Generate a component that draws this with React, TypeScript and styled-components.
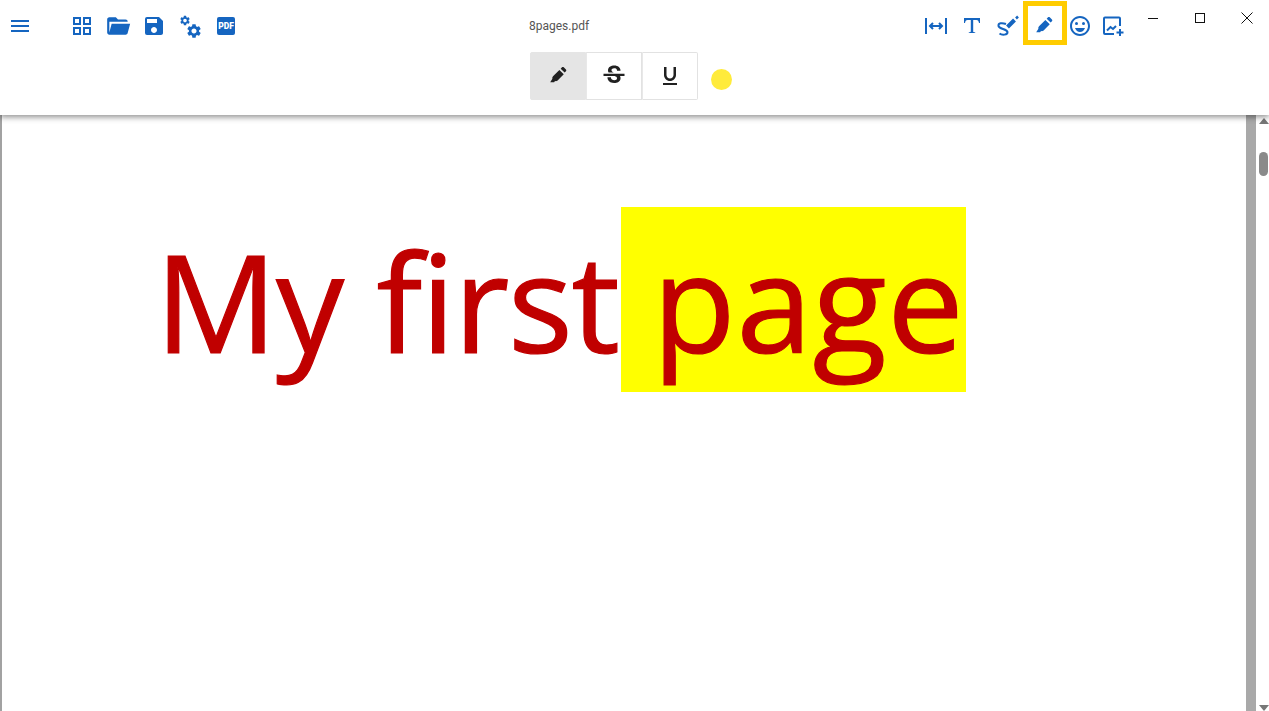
import styled, { createGlobalStyle } from "styled-components";
import {
  MdMenu,
  MdSave,
  MdOutlineEmojiEmotions,
  MdStrikethroughS,
  MdFormatUnderlined,
  MdSettings,
} from "react-icons/md";

const GlobalStyle = createGlobalStyle`
  html, body {
    margin: 0;
    height: 100%;
    overflow: hidden;
    background: #fff;
    font-family: "Roboto", "Liberation Sans", sans-serif;
  }
  #root { height: 100%; }
`;

const Wrapper = styled.div`
  height: 711px;
  display: flex;
  flex-direction: column;
`;

const Header = styled.header`
  position: relative;
  z-index: 2;
  height: 115px;
  flex: none;
  background: #fff;
  box-shadow: 0 2px 6px rgba(0, 0, 0, 0.45);
`;

const TopRow = styled.div`
  height: 52px;
  display: flex;
`;

const LeftGroup = styled.div`
  display: flex;
  padding: 8px 0 0 2px;
`;

const MenuSlot = styled.div`
  margin-right: 26px;
`;

const Title = styled.div`
  flex: 1;
  padding-top: 18px;
  text-align: center;
  font-size: 12px;
  line-height: 16px;
  color: #555;
`;

const RightGroup = styled.div`
  position: relative;
  display: flex;
  padding: 8px 0 0 0;
  margin-left: 44px;
`;

const IconButton = styled.div`
  width: 36px;
  height: 36px;
  display: flex;
  align-items: center;
  justify-content: center;
  color: #1565c0;
`;

const Marked = styled.div`
  position: absolute;
  left: 105px;
  top: 1px;
  width: 44px;
  height: 44px;
  box-sizing: border-box;
  border: 5px solid #ffcc00;
`;

const WindowControls = styled.div`
  display: flex;
  margin-left: -5px;
  margin-right: -1px;
`;

const WindowButton = styled.div`
  width: 47px;
  height: 36px;
  display: flex;
  align-items: center;
  justify-content: center;
  color: #111;
`;

const PdfBadge = styled.span`
  width: 18px;
  height: 18px;
  border-radius: 2px;
  background: #1565c0;
  color: #fff;
  font-family: "Roboto", sans-serif;
  font-weight: 900;
  font-size: 8.5px;
  line-height: 18px;
  text-align: center;
`;

const ToolRow = styled.div`
  display: flex;
  align-items: center;
  justify-content: center;
  padding-right: 7px;
`;

const ToggleGroup = styled.div`
  display: flex;
`;

const Toggle = styled.div<{ $active?: boolean }>`
  width: 56px;
  height: 48px;
  box-sizing: border-box;
  display: flex;
  align-items: center;
  justify-content: center;
  color: #212121;
  border: 1px solid ${(p) => (p.$active ? "#e5e5e5" : "#e2e2e2")};
  background: ${(p) => (p.$active ? "#e5e5e5" : "#fff")};
  border-radius: ${(p) => (p.$active ? "2px 0 0 2px" : "0")};
  & + & {
    border-left-color: #e8e8e8;
  }
  &:last-child {
    border-radius: 0 2px 2px 0;
  }
`;

const ColorDot = styled.div`
  width: 21px;
  height: 21px;
  margin: 6px 0 0 13px;
  border-radius: 50%;
  background: #ffeb3b;
`;

const Body = styled.main`
  flex: 1;
  min-height: 0;
  display: flex;
`;

const Page = styled.section`
  flex: 1;
  box-sizing: border-box;
  border-left: 2px solid #a2a2a2;
  background: #fff;
  padding: 92px 0 0 153px;
  overflow: hidden;
`;

const PageLine = styled.div`
  display: flex;
  white-space: pre;
  font-family: "Open Sans", sans-serif;
  font-size: 136px;
  line-height: 187px;
  height: 185px;
  color: #c00000;
  -webkit-text-stroke: 1.2px #c00000;
`;

const PlainRun = styled.span`
  letter-spacing: -1.4px;
  margin-right: 2px;
`;

const Highlight = styled.span`
  height: 185px;
  background: #ffff00;
  word-spacing: -4px;
  letter-spacing: 0.7px;
  padding-right: 2px;
`;

const Gutter = styled.div`
  width: 10px;
  flex: none;
  background: #a9a9a9;
`;

const ScrollTrack = styled.div`
  width: 13px;
  flex: none;
  box-sizing: border-box;
  padding: 3px 1px 0 3px;
  display: flex;
  flex-direction: column;
  align-items: center;
  background: #fff;
`;

const ScrollArrow = styled.div<{ $down?: boolean }>`
  width: 0;
  height: 0;
  border-left: 5px solid transparent;
  border-right: 5px solid transparent;
  ${(p) =>
    p.$down ? "border-top: 6px solid #777;" : "border-bottom: 6px solid #777;"}
`;

const ScrollThumb = styled.div`
  width: 9px;
  height: 24px;
  margin-top: 28px;
  margin-bottom: auto;
  border-radius: 5px;
  background: #8a8a8a;
`;

function GridIcon() {
  return (
    <svg width="24" height="24" viewBox="0 0 24 24" fill="none" stroke="currentColor" strokeWidth="2">
      <rect x="4" y="4" width="6" height="6" />
      <rect x="14" y="4" width="6" height="6" />
      <rect x="4" y="14" width="6" height="6" />
      <rect x="14" y="14" width="6" height="6" />
    </svg>
  );
}

function FolderIcon() {
  return (
    <svg width="26" height="26" viewBox="0 0 24 24" fill="currentColor">
      <path d="M19,20H4C2.89,20 2,19.1 2,18V6C2,4.89 2.89,4 4,4H10L12,6H19A2,2 0 0,1 21,8H21L4,8V18L6.14,10H23.21L20.93,18.5C20.7,19.37 19.92,20 19,20Z" />
    </svg>
  );
}

function CogsIcon() {
  return (
    <svg width="24" height="24" viewBox="0 0 24 24" fill="currentColor">
      <MdSettings x={1} y={0.5} size={12} />
      <MdSettings x={7.5} y={8.5} size={17} />
    </svg>
  );
}

function FitWidthIcon() {
  return (
    <svg width="24" height="24" viewBox="0 0 24 24" fill="none" stroke="currentColor" strokeWidth="2">
      <path d="M2 4v16M22 4v16M6 12h12" />
      <path d="M9 9l-3 3 3 3M15 9l3 3-3 3" />
    </svg>
  );
}

function SerifTIcon() {
  return (
    <svg width="24" height="24" viewBox="0 0 24 24" fill="currentColor">
      <path d="M4 4h16v5h-1c-.3-1.800-1-3-2.500-3h-3.300v11.500c0 .6.5.8 2 .8v.7H8.800v-.7c1.500 0 2-.2 2-.8V6H7.500C6 6 5.300 7.200 5 9H4z" />
    </svg>
  );
}

function SignatureIcon() {
  return (
    <svg width="24" height="24" viewBox="0 0 24 24" fill="none" stroke="currentColor">
      <path strokeWidth="2" d="M10 10C6 8.500 2 9 2.500 12C3 15 11 15 11.500 18C11.700 21 6 21.500 3.500 19.500" />
      <path strokeWidth="4" d="M11.500 13L18.500 6" />
      <path strokeWidth="2.500" d="M20 4.500l2-2" />
    </svg>
  );
}

function MarkerIcon() {
  return (
    <svg width="21" height="21" viewBox="1 1 24 24" fill="currentColor">
      <path d="M14 5.500L19 10.500L12 17.500C11 18.300 10 18.500 9 18.200L8 19.500H3.500L6 15.500C5.800 14.500 6 13.500 7 12.500Z" />
      <path d="M15.500 4l1.500-1.500c.6-.6 1.400-.6 2 0l2.500 2.500c.6.6.6 1.400 0 2L20 8.500z" />
    </svg>
  );
}

function AddImageIcon() {
  return (
    <svg width="24" height="24" viewBox="3 0 24 24" overflow="visible" fill="none" stroke="currentColor" strokeWidth="2">
      <path d="M19 12V4.500a1 1 0 0 0-1-1H4a1 1 0 0 0-1 1V19a1 1 0 0 0 1 1h9" />
      <path d="M6 16.500l3.500-3.500 2.500 2 3-3" />
      <path d="M19 15v7M15.500 18.500h7" />
    </svg>
  );
}

function WindowIcon({ kind }: { kind: "min" | "max" | "close" }) {
  return (
    <svg width="12" height="12" viewBox="0 0 12 12" fill="none" stroke="currentColor" strokeWidth="1">
      {kind === "min" && <path d="M1 6.500h10" />}
      {kind === "max" && <rect x="1.500" y="1.500" width="9" height="9" />}
      {kind === "close" && <path d="M.5 .5l11 11M11.500 .5l-11 11" />}
    </svg>
  );
}

export default function App() {
  return (
    <Wrapper>
      <GlobalStyle />
      <Header>
        <TopRow>
          <LeftGroup>
            <MenuSlot>
              <IconButton>
                <MdMenu size={24} />
              </IconButton>
            </MenuSlot>
            <IconButton>
              <GridIcon />
            </IconButton>
            <IconButton>
              <FolderIcon />
            </IconButton>
            <IconButton>
              <MdSave size={24} />
            </IconButton>
            <IconButton>
              <CogsIcon />
            </IconButton>
            <IconButton>
              <PdfBadge>PDF</PdfBadge>
            </IconButton>
          </LeftGroup>
          <Title>8pages.pdf</Title>
          <RightGroup>
            <IconButton>
              <FitWidthIcon />
            </IconButton>
            <IconButton>
              <SerifTIcon />
            </IconButton>
            <IconButton>
              <SignatureIcon />
            </IconButton>
            <IconButton>
              <MarkerIcon />
            </IconButton>
            <IconButton>
              <MdOutlineEmojiEmotions size={24} />
            </IconButton>
            <IconButton>
              <AddImageIcon />
            </IconButton>
            <Marked />
          </RightGroup>
          <WindowControls>
            <WindowButton>
              <WindowIcon kind="min" />
            </WindowButton>
            <WindowButton>
              <WindowIcon kind="max" />
            </WindowButton>
            <WindowButton>
              <WindowIcon kind="close" />
            </WindowButton>
          </WindowControls>
        </TopRow>
        <ToolRow>
          <ToggleGroup>
            <Toggle $active>
              <MarkerIcon />
            </Toggle>
            <Toggle>
              <MdStrikethroughS size={28} />
            </Toggle>
            <Toggle>
              <MdFormatUnderlined size={24} />
            </Toggle>
          </ToggleGroup>
          <ColorDot />
        </ToolRow>
      </Header>
      <Body>
        <Page>
          <PageLine>
            <PlainRun>My first</PlainRun>
            <Highlight> page</Highlight>
          </PageLine>
        </Page>
        <Gutter />
        <ScrollTrack>
          <ScrollArrow />
          <ScrollThumb />
          <ScrollArrow $down />
        </ScrollTrack>
      </Body>
    </Wrapper>
  );
}
